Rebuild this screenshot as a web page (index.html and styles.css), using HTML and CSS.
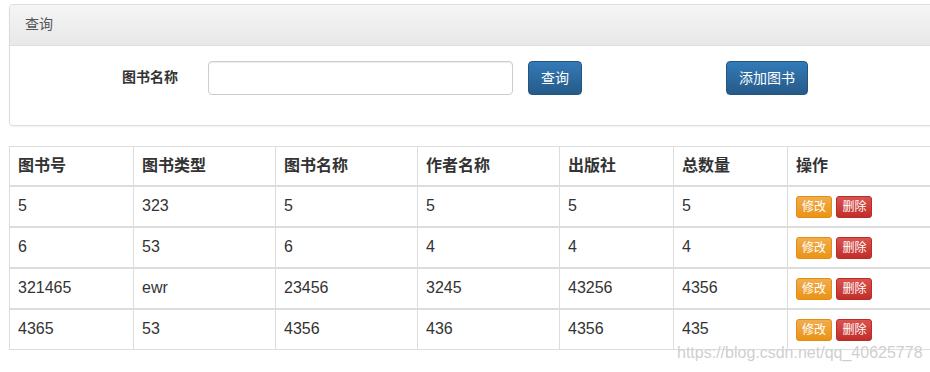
FILE: index.html
```html
<!DOCTYPE html>
<html lang="zh-CN">
<head>
  <meta charset="UTF-8" />
  <title>图书管理</title>
  <link rel="stylesheet" href="styles.css">
</head>
<body>
  <div class="wrap">
    <div class="panel">
      <div class="panel-heading">查询</div>
      <div class="panel-body">
        <form class="search-form">
          <label for="bookName" class="search-label">图书名称</label>
          <input type="text" id="bookName" class="search-input" />
          <button type="button" class="btn btn-primary">查询</button>
          <button type="button" class="btn btn-primary add-btn">添加图书</button>
        </form>
      </div>
    </div>

    <table class="book-table">
      <colgroup>
        <col style="width:124px"><col style="width:142px"><col style="width:142px"><col style="width:142px">
        <col style="width:114px"><col style="width:114px"><col>
      </colgroup>
      <thead>
        <tr><th>图书号</th><th>图书类型</th><th>图书名称</th><th>作者名称</th><th>出版社</th><th>总数量</th><th>操作</th></tr>
      </thead>
      <tbody>
        <tr><td>5</td><td>323</td><td>5</td><td>5</td><td>5</td><td>5</td>
          <td><button class="btn-xs btn-warning">修改</button> <button class="btn-xs btn-danger">删除</button></td></tr>
        <tr><td>6</td><td>53</td><td>6</td><td>4</td><td>4</td><td>4</td>
          <td><button class="btn-xs btn-warning">修改</button> <button class="btn-xs btn-danger">删除</button></td></tr>
        <tr><td>321465</td><td>ewr</td><td>23456</td><td>3245</td><td>43256</td><td>4356</td>
          <td><button class="btn-xs btn-warning">修改</button> <button class="btn-xs btn-danger">删除</button></td></tr>
        <tr><td>4365</td><td>53</td><td>4356</td><td>436</td><td>4356</td><td>435</td>
          <td><button class="btn-xs btn-warning">修改</button> <button class="btn-xs btn-danger">删除</button></td></tr>
      </tbody>
    </table>
  </div>

  <div class="watermark">https://blog.csdn.net/qq_40625778</div>
</body>
</html>
```

FILE: styles.css
```css
html,body{overflow:hidden}
body{margin:0;padding:4px 0 0 9px;font-family:"Liberation Sans","Noto Sans CJK SC",sans-serif;font-size:14px;line-height:1.42857;color:#333;background:#fff}
.wrap{width:1000px}

/* 查询面板 */
.panel{border:1px solid #ddd;border-radius:4px;box-shadow:0 1px 2px rgba(0,0,0,.05);margin-bottom:20px;background:#fff}
.panel-heading{padding:10px 15px;border-bottom:1px solid #ddd;border-radius:3px 3px 0 0;background:linear-gradient(#f5f5f5,#e8e8e8);color:#555}
.panel-body{padding:15px}
.search-form{display:flex;align-items:center;margin-bottom:15px}
.search-label{width:153px;text-align:right;font-weight:bold;font-size:14px;color:#333}
.search-input{width:305px;height:34px;box-sizing:border-box;margin-left:30px;padding:6px 12px;border:1px solid #ccc;border-radius:4px;box-shadow:inset 0 1px 1px rgba(0,0,0,.075);font-size:14px}
.btn{height:34px;padding:6px 12px;margin-left:15px;border-radius:4px;font-family:inherit;font-size:14px;line-height:20px;cursor:pointer}
.btn-primary{color:#fff;border:1px solid #245580;background:linear-gradient(#337ab7,#265a88)}
.add-btn{margin-left:144px}

/* 图书表格 */
.book-table{width:1000px;border-collapse:collapse;table-layout:fixed;font-size:16px}
.book-table th,.book-table td{padding:8px;text-align:left;vertical-align:middle;border:1px solid #ddd;line-height:1.42857}
.book-table th{font-weight:bold;border-bottom-width:2px;padding-bottom:7px}
.book-table td{border-bottom-width:2px}
.book-table tbody tr:last-child td{border-bottom-width:1px}
.btn-xs{padding:1px 5px;font-family:inherit;font-size:12px;line-height:18px;border-radius:3px;color:#fff;cursor:pointer}
.btn-warning{border:1px solid #e38d13;background:linear-gradient(#f0ad4e,#eb9316)}
.btn-danger{border:1px solid #b92c28;background:linear-gradient(#d9534f,#c12e2a)}

.watermark{position:absolute;left:677px;top:342px;font-size:16px;color:rgba(190,190,190,.75);text-shadow:0 0 1px #fff;font-family:"Liberation Sans",sans-serif}
```
